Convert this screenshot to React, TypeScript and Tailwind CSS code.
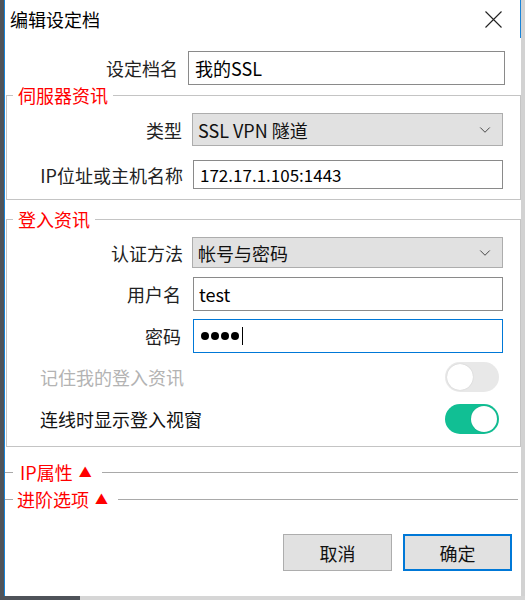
import React from 'react'
import { ChevronDown } from 'lucide-react'

const font = "font-['Noto_Sans_CJK_SC','Noto_Sans',sans-serif]"

function Toggle({ on, disabled }: { on: boolean; disabled?: boolean }) {
  return (
    <div
      className={`flex h-[30px] w-[54px] items-center rounded-full px-[2px] ${
        on ? 'justify-end bg-[#11bf94]' : 'justify-start bg-[#e6e6e6]'
      } ${disabled ? 'opacity-90' : ''}`}
    >
      <div className="h-[26px] w-[26px] rounded-full bg-white shadow-[0_0_1px_rgba(0,0,0,0.25)]" />
    </div>
  )
}

function Combo({ value, h }: { value: string; h: string }) {
  return (
    <div className={`flex w-[311px] items-center justify-between border border-[#adadad] bg-[#e1e1e1] pl-[5px] pr-[8px] ${h}`}>
      <span className="text-[18px] leading-[22px] text-[#111]">{value}</span>
      <ChevronDown size={18} strokeWidth={1.3} className="text-[#444]" />
    </div>
  )
}

function Collapsed({ label, pad, lineGap }: { label: string; pad: string; lineGap: string }) {
  return (
    <div className="flex h-[22px] items-center pr-[3px]">
      <div className="h-px w-[8px] bg-[#a9a9a9]" />
      <span className={`text-[18px] leading-[22px] text-[#ff0000] ${pad}`}>{label}</span>
      <span className="ml-[6px] text-[13px] leading-[22px] text-[#ff0000]">▲</span>
      <div className={`h-px flex-1 bg-[#a9a9a9] ${lineGap}`} />
    </div>
  )
}

export default function App() {
  return (
    <div className={`flex h-[600px] w-[525px] flex-col overflow-hidden bg-[#cfcfcf] ${font}`}>
      <div className="flex h-[596px]">
        {/* desktop behind the dialog */}
        <div className="w-[4px] bg-[#4f5359]" />

        <div className="flex w-[517px] flex-col border-l border-[#1883d7] bg-white">
          {/* title bar */}
          <div className="flex h-[38px] items-center justify-between border-r border-[#1883d7] pl-[5px] pr-[18px]">
            <span className="text-[18px] leading-[22px] text-black">编辑设定档</span>
            <svg width="17" height="17" viewBox="0 0 17 17" className="text-[#222]">
              <path d="M0.5 0.5 16.5 16.5 M16.5 0.5 0.5 16.5" stroke="currentColor" strokeWidth="1.1" fill="none" />
            </svg>
          </div>

          {/* profile name */}
          <div className="mt-[13px] flex items-center">
            <span className="w-[173px] text-right text-[18px] leading-[22px] text-[#222]">设定档名</span>
            <div className="ml-[10px] flex h-[34px] w-[317px] items-center border border-[#8a8a8a] pl-[6px] text-[18px] leading-[22px] text-black">
              我的SSL
            </div>
          </div>

          {/* server info */}
          <fieldset className="ml-[1px] w-[515px] border border-[#c4c4c4] pb-[10px]">
            <legend className="ml-[6px] px-[5px] text-[18px] leading-[20px] text-[#ff0000]">伺服器资讯</legend>
            <div className="mt-[8px] flex items-center">
              <span className="w-[175px] text-right text-[18px] leading-[22px] text-[#222]">类型</span>
              <div className="ml-[10px]">
                <Combo value="SSL VPN 隧道" h="h-[33px]" />
              </div>
            </div>
            <div className="mt-[14px] flex items-center">
              <span className="w-[176px] text-right text-[18px] leading-[22px] text-[#222]">IP位址或主机名称</span>
              <div className="ml-[10px] flex h-[29px] w-[310px] items-center border border-[#8a8a8a] pl-[6px] text-[17px] leading-[22px] text-black">
                172.17.1.105:1443
              </div>
            </div>
          </fieldset>

          {/* login info */}
          <fieldset className="ml-[1px] mt-[9px] w-[515px] border border-[#c4c4c4] pb-[12px]">
            <legend className="ml-[6px] px-[5px] text-[18px] leading-[20px] text-[#ff0000]">登入资讯</legend>
            <div className="mt-[8px] flex items-center">
              <span className="w-[176px] text-right text-[18px] leading-[22px] text-[#222]">认证方法</span>
              <div className="ml-[9px]">
                <Combo value="帐号与密码" h="h-[31px]" />
              </div>
            </div>
            <div className="mt-[9px] flex items-center">
              <span className="w-[174px] text-right text-[18px] leading-[22px] text-[#222]">用户名</span>
              <div className="ml-[12px] flex h-[34px] w-[310px] items-center border border-[#8a8a8a] pl-[5px] text-[18px] leading-[22px] text-black">
                test
              </div>
            </div>
            <div className="mt-[8px] flex items-center">
              <span className="w-[174px] text-right text-[18px] leading-[22px] text-[#222]">密码</span>
              <div className="ml-[12px] flex h-[34px] w-[310px] items-center gap-[2px] border border-[#0078d7] pl-[7px]">
                <span className="h-[8px] w-[8px] rounded-full bg-black" />
                <span className="h-[8px] w-[8px] rounded-full bg-black" />
                <span className="h-[8px] w-[8px] rounded-full bg-black" />
                <span className="h-[8px] w-[8px] rounded-full bg-black" />
                <span className="ml-[1px] h-[18px] w-px bg-black" />
              </div>
            </div>
            <div className="mt-[9px] flex items-center justify-between pl-[33px] pr-[21px]">
              <span className="text-[18px] leading-[22px] text-[#b3b3b3]">记住我的登入资讯</span>
              <Toggle on={false} disabled />
            </div>
            <div className="mt-[12px] flex items-center justify-between pl-[33px] pr-[21px]">
              <span className="text-[18px] leading-[22px] text-[#111]">连线时显示登入视窗</span>
              <Toggle on />
            </div>
          </fieldset>

          {/* collapsed sections */}
          <div className="mt-[14px] flex flex-col gap-[5px]">
            <Collapsed label="IP属性" pad="pl-[7px]" lineGap="ml-[10px]" />
            <Collapsed label="进阶选项" pad="pl-[4px]" lineGap="ml-[10px]" />
          </div>

          {/* buttons */}
          <div className="mt-[24px] flex justify-end gap-[11px] pr-[9px]">
            <button className="flex h-[37px] w-[109px] items-center justify-center border border-[#adadad] bg-[#e1e1e1] text-[18px] leading-[22px] text-[#111]">
              取消
            </button>
            <button className="flex h-[37px] w-[109px] items-center justify-center border-2 border-[#0078d7] bg-[#e1e1e1] text-[18px] leading-[22px] text-[#111]">
              确定
            </button>
          </div>
        </div>

        <div className="flex-1 bg-[#d2d2d2]" />
      </div>
      <div className="flex h-[4px]">
        <div className="w-[80px] bg-[#4f5359]" />
        <div className="flex-1 bg-[#d6d6d6]" />
      </div>
    </div>
  )
}
